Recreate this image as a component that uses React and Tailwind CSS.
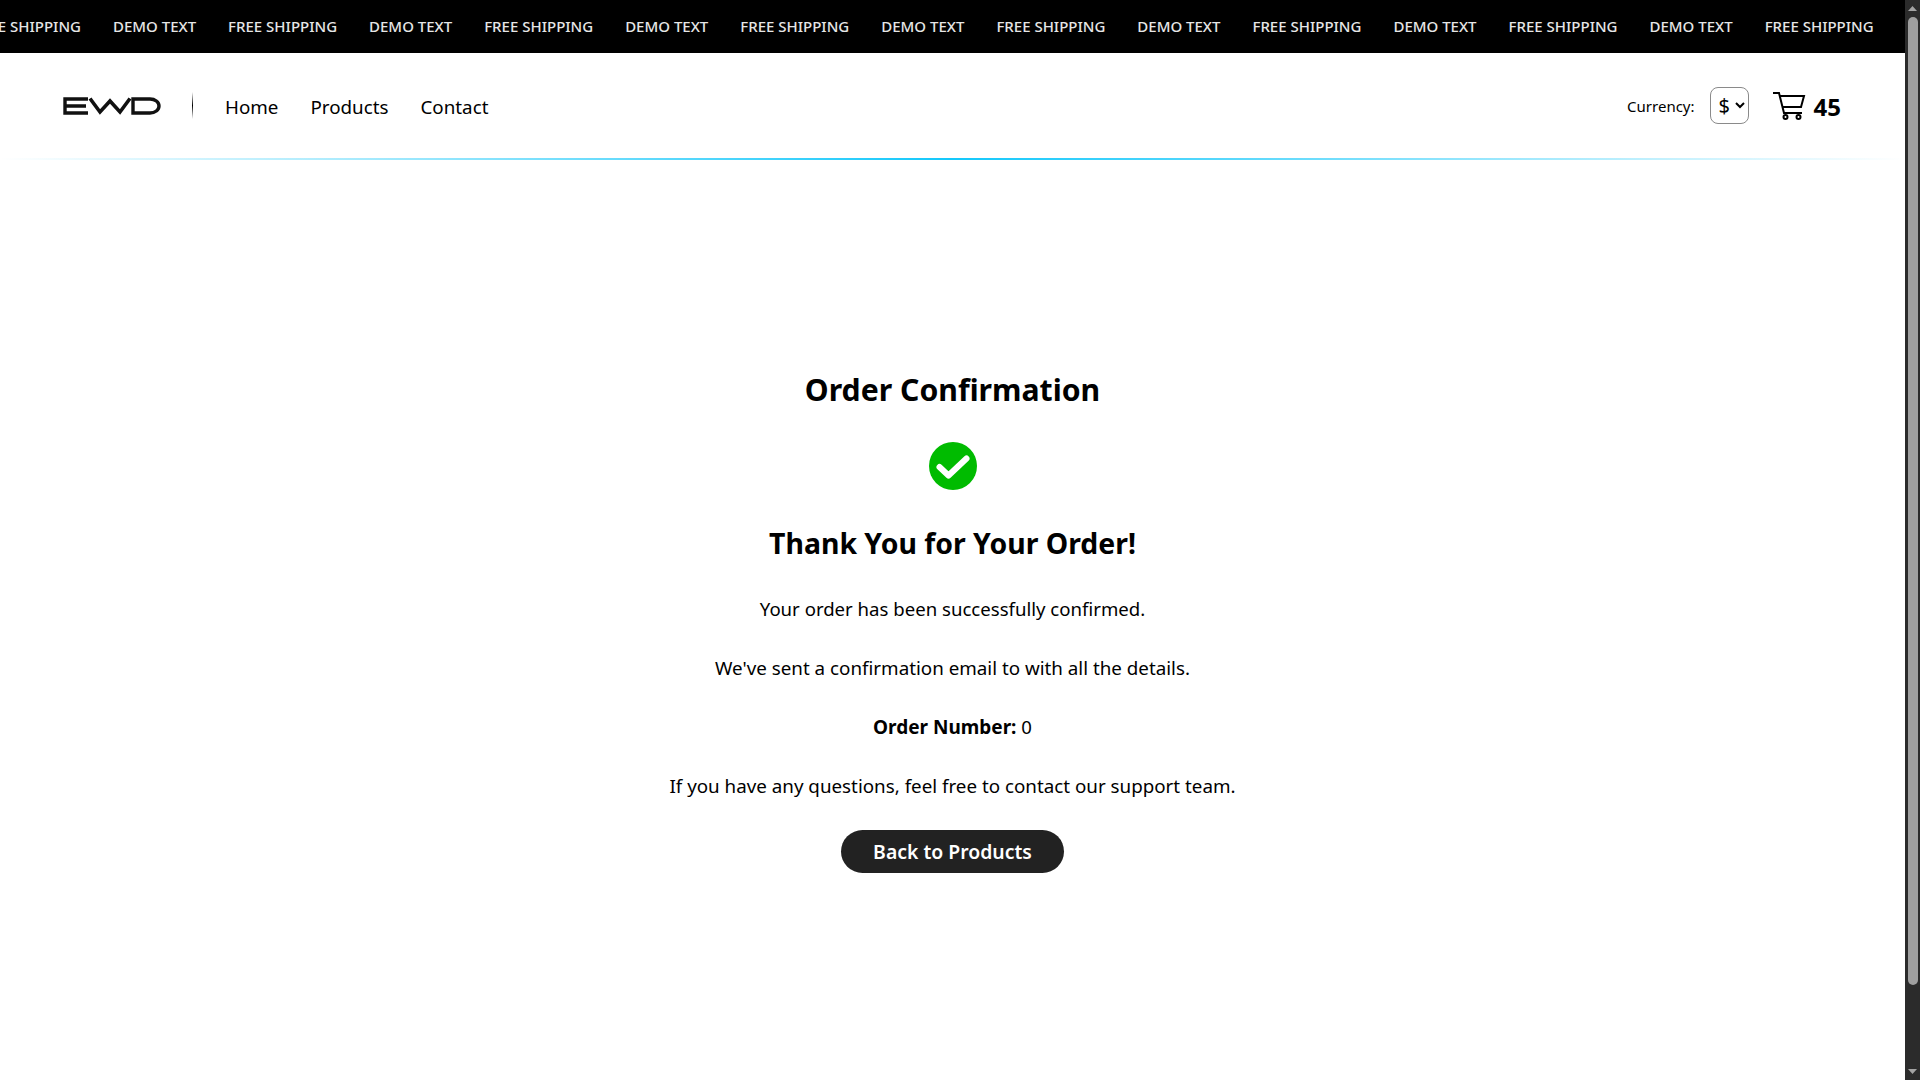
import React from 'react';

const Ticker = () => {
  const items = [];
  for (let i = 0; i < 8; i++) {
    items.push('FREE SHIPPING', 'DEMO TEXT');
  }
  return (
    <div className="h-[53px] bg-black overflow-hidden flex items-center">
      <div className="flex gap-8 shrink-0 -ml-[28px] text-[15px] font-medium text-[#e6e6e6] whitespace-nowrap">
        {items.map((t, i) => (
          <span key={i}>{t}</span>
        ))}
      </div>
    </div>
  );
};

const Logo = () => (
  <svg width="98" height="18" viewBox="0 0 98 18" fill="none" stroke="#111" strokeWidth="3.4">
    <path d="M25 2H2V16H25M3 9H23" />
    <path d="M27 1.5L37 15L47 4L57 15L67 1.5" strokeWidth="3.6" />
    <path d="M70 2V16H87C92 16 96 13 96 9S92 2 87 2Z" />
  </svg>
);

const CartIcon = () => (
  <svg width="33" height="28" viewBox="0 0 33 28" fill="none" stroke="#000" strokeWidth="2">
    <path d="M0 1H6L11 21H29" />
    <path d="M7 4H31L28 15H10" />
    <circle cx="12.5" cy="25" r="2" />
    <circle cx="25.5" cy="25" r="2" />
  </svg>
);

const Navbar = () => (
  <nav className="h-[107px] flex items-center justify-between pl-[63px] pr-[64px] pb-[2px] relative">
    <div className="flex items-center">
      <Logo />
      <div className="w-px h-[27px] ml-[31px] mr-[32px] bg-gradient-to-b from-transparent via-black to-transparent" />
      <div className="flex items-center gap-8 text-[18.8px] text-black pt-[3px]">
        <a>Home</a>
        <a>Products</a>
        <a>Contact</a>
      </div>
    </div>
    <div className="flex items-center">
      <span className="text-[15px] text-black pt-[2px]">Currency:</span>
      <div className="ml-[15px] w-[39px] h-[37px] border border-[#8a8a8a] rounded-lg flex items-center justify-between pl-2 pr-[3px] text-[20px]">
        <span>$</span>
        <svg width="10" height="7" viewBox="0 0 10 7" fill="none" stroke="#000" strokeWidth="2"><path d="M1 1L5 5L9 1" /></svg>
      </div>
      <div className="ml-[24px] flex items-center gap-2">
        <CartIcon />
        <span className="text-[24px] font-bold text-black pt-[2px]">45</span>
      </div>
    </div>
    <div className="absolute left-0 right-0 bottom-0 h-[2px] bg-linear-to-r/srgb from-transparent via-[#14c8fb] to-transparent" />
  </nav>
);

const Confirmation = () => (
  <main className="flex flex-col items-center pt-[208px] text-black text-[18.6px] text-center">
    <h1 className="text-[30.2px] font-bold leading-[44px]">Order Confirmation</h1>
    <svg className="mt-[30px]" width="48" height="48" viewBox="0 0 48 48">
      <circle cx="24" cy="24" r="24" fill="#00bb00" />
      <path d="M10.5 25L19.5 33.5L37.5 16.5" fill="none" stroke="#fff" strokeWidth="6" strokeLinecap="round" strokeLinejoin="round" />
    </svg>
    <h2 className="mt-[34px] text-[28.4px] font-bold leading-[38px]">Thank You for Your Order!</h2>
    <p className="mt-[33px] leading-[28px]">Your order has been successfully confirmed.</p>
    <p className="mt-[31px] leading-[28px] text-[18.8px]">We've sent a confirmation email to with all the details.</p>
    <p className="mt-[31px] leading-[28px]"><strong className="text-[19px]">Order Number:</strong> 0</p>
    <p className="mt-[31px] leading-[28px] text-[18.8px]">If you have any questions, feel free to contact our support team.</p>
    <button className="mt-[30px] w-[223px] h-[43px] pt-[1px] rounded-full bg-[#222222] text-white font-semibold text-[19.4px]">Back to Products</button>
  </main>
);

const Scrollbar = () => (
  <div className="w-[15px] h-full bg-[#2b2b2b] flex flex-col items-center shrink-0">
    <svg className="mt-[6px]" width="9" height="5" viewBox="0 0 9 5"><path d="M4.5 0L9 5H0Z" fill="#a3a3a3" /></svg>
    <div className="mt-[6px] w-[10px] h-[968px] rounded-full bg-[#9f9f9f]" />
    <div className="flex-1" />
    <svg className="mb-[6px]" width="9" height="5" viewBox="0 0 9 5"><path d="M0 0H9L4.5 5Z" fill="#a3a3a3" /></svg>
  </div>
);

export default function App() {
  return (
    <div className="h-screen flex overflow-hidden bg-white font-['Noto_Sans',sans-serif]">
      <div className="flex-1 min-w-0">
        <Ticker />
        <Navbar />
        <Confirmation />
      </div>
      <Scrollbar />
    </div>
  );
}
